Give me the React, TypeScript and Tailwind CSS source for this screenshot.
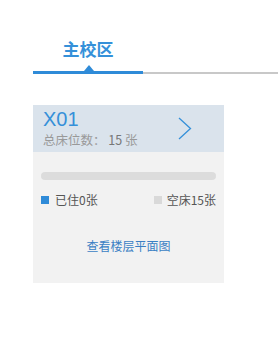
import React from "react";

export default function App() {
  const cjk = { fontFamily: '"Noto Sans CJK SC", "Noto Sans", sans-serif' };
  return (
    <div className="w-[278px] h-[337px] bg-white" style={cjk}>
      <div className="pt-[37px]">
        <div className="flex pl-[33px]">
          <div className="w-[110px] text-center text-[17px] leading-[24px] font-bold text-[#3590d9]">主校区</div>
        </div>
        <div className="mt-[10px] flex items-end">
          <div className="w-[33px] h-[2px] bg-white" />
          <div className="relative w-[110px] h-[3px] bg-[#2f8bd8]">
            <div className="absolute left-[51px] top-[-6px] w-0 h-0 border-l-[5px] border-r-[5px] border-b-[6px] border-l-transparent border-r-transparent border-b-[#2f8bd8]" />
          </div>
          <div className="flex-1 h-[2px] bg-[#c8c8c8]" />
        </div>
      </div>
      <div className="ml-[33px] mt-[31px] w-[191px] h-[178px] bg-[#f2f2f2]">
        <div className="h-[47px] bg-[#dae3ec] flex items-center justify-between pl-[10px] pr-[32px]">
          <div className="flex flex-col">
            <div className="text-[20px] leading-[22px] text-[#3590d9]" style={{ fontFamily: '"Liberation Sans", "Noto Sans CJK SC", sans-serif' }}>X01</div>
            <div className="text-[12.5px] leading-[18px] text-[#999999] mt-[1px]">总床位数： <span className="text-[#777]">15</span> 张</div>
          </div>
          <svg width="14" height="23" viewBox="0 0 14 23" fill="none">
            <path d="M1 1 L12.5 11.5 L1 22" stroke="#3590d9" strokeWidth="1.3" />
          </svg>
        </div>
        <div className="px-[8px] pt-[20px]">
          <div className="h-[8px] rounded-full bg-[#dcdcdc]" />
          <div className="mt-[12px] flex items-center justify-between text-[12px] leading-[16px] text-[#555]">
            <div className="flex items-center">
              <div className="w-[8px] h-[8px] bg-[#2f8bd8] mr-[6px]" />
              <span>已住0张</span>
            </div>
            <div className="flex items-center">
              <div className="w-[8px] h-[8px] bg-[#d9d9d9] mr-[5px]" />
              <span>空床15张</span>
            </div>
          </div>
          <div className="mt-[30px] text-center text-[12px] leading-[16px] text-[#3a7fc4]">查看楼层平面图</div>
        </div>
      </div>
    </div>
  );
}
